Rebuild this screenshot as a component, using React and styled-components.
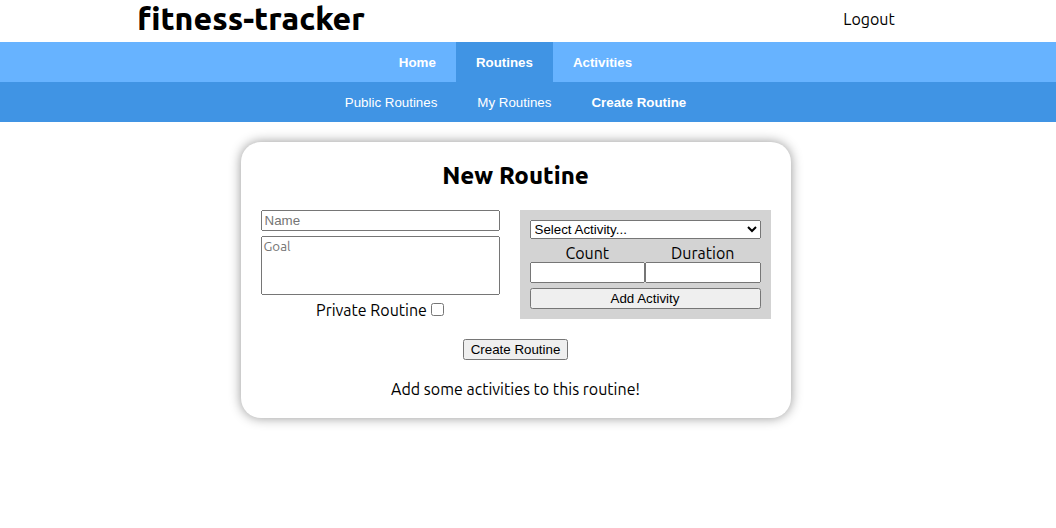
import React from "react";
import styled, { createGlobalStyle } from "styled-components";

const GlobalStyle = createGlobalStyle`
  body {
    margin: 0;
    background: #fff;
    color: #000;
    font-family: Ubuntu, "Noto Sans", "Open Sans", sans-serif;
    font-size: 16px;
    line-height: 18px;
    font-variant-ligatures: none;
  }
`;

const Header = styled.header`
  display: flex;
  justify-content: space-between;
  align-items: center;
  height: 42px;
  padding: 0 calc(13% + 24px) 4px 13%;
  box-sizing: border-box;
`;

const Title = styled.h1`
  margin: 0;
  padding-bottom: 2px;
  font-size: 32px;
  font-weight: 800;
  line-height: 36px;
`;

const Logout = styled.a`
  color: inherit;
  text-decoration: none;
`;

const NavBar = styled.nav`
  display: flex;
  justify-content: center;
  height: 40px;
  padding-right: 25px;
  background: ${(p) => (p.$sub ? "#4094e4" : "#67b3ff")};
`;

const NavButton = styled.button`
  border: 0;
  padding: 0 20px;
  color: #fff;
  background: ${(p) => (p.$active ? "#4094e4" : "transparent")};
  font-family: "Liberation Sans", Arial, sans-serif;
  font-weight: ${(p) => (p.$bold ? "bold" : "normal")};
`;

const Main = styled.main`
  display: flex;
  justify-content: center;
  padding: 20px 25px 20px 0;
`;

const Card = styled.form`
  box-sizing: border-box;
  width: 550px;
  padding: 20px;
  border-radius: 20px;
  box-shadow: 0 0 12px rgba(0, 0, 0, 0.42);
  text-align: center;
`;

const Heading = styled.h2`
  margin: 0 0 20px;
  font-size: 24px;
  font-weight: 800;
  line-height: 28px;
`;

const Columns = styled.div`
  display: flex;
  gap: 20px;
`;

const Fields = styled.div`
  display: flex;
  flex: 1;
  min-width: 0;
  flex-direction: column;
  gap: 5px;
`;

const ActivityPanel = styled.fieldset`
  display: flex;
  box-sizing: border-box;
  width: 251px;
  margin: 0;
  padding: 10px;
  border: 0;
  flex-direction: column;
  gap: 5px;
  background: lightgray;
`;

const Input = styled.input`
  box-sizing: border-box;
  width: 100%;
  height: 21px;
  font-family: "Liberation Sans", Arial, sans-serif;
`;

const Goal = styled.textarea`
  display: block;
  box-sizing: border-box;
  height: 59px;
  resize: none;
  font-family: Ubuntu, "Noto Sans", sans-serif;
`;

const CheckLabel = styled.label`
  display: flex;
  height: 19px;
  align-items: center;
  justify-content: center;
  gap: 4px;
`;

const Checkbox = styled.input`
  width: 13px;
  height: 13px;
  margin: 0;
`;

const Select = styled.select`
  height: 19px;
  font-family: "Liberation Sans", Arial, sans-serif;
`;

const Amounts = styled.div`
  display: grid;
  grid-template-columns: 1fr 1fr;
`;

const AmountLabel = styled.label`
  display: flex;
  flex-direction: column;
`;

const Button = styled.button`
  height: 21px;
  padding: 1px 6px;
  font-family: "Liberation Sans", Arial, sans-serif;
`;

const Submit = styled.div`
  display: flex;
  justify-content: center;
  margin: 20px 0;
`;

const Message = styled.p`
  margin: 0;
`;

export default function App() {
  return (
    <>
      <GlobalStyle />
      <Header>
        <Title>fitness-tracker</Title>
        <Logout href="#logout">Logout</Logout>
      </Header>
      <NavBar>
        <NavButton $bold>Home</NavButton>
        <NavButton $bold $active>Routines</NavButton>
        <NavButton $bold>Activities</NavButton>
      </NavBar>
      <NavBar $sub>
        <NavButton>Public Routines</NavButton>
        <NavButton>My Routines</NavButton>
        <NavButton $bold>Create Routine</NavButton>
      </NavBar>
      <Main>
        <Card onSubmit={(e) => e.preventDefault()}>
          <Heading>New Routine</Heading>
          <Columns>
            <Fields>
              <Input placeholder="Name" aria-label="Name" />
              <Goal placeholder="Goal" aria-label="Goal" />
              <CheckLabel>
                Private Routine
                <Checkbox type="checkbox" />
              </CheckLabel>
            </Fields>
            <ActivityPanel>
              <Select aria-label="Activity">
                <option>Select Activity...</option>
              </Select>
              <Amounts>
                <AmountLabel>
                  Count
                  <Input />
                </AmountLabel>
                <AmountLabel>
                  Duration
                  <Input />
                </AmountLabel>
              </Amounts>
              <Button type="button">Add Activity</Button>
            </ActivityPanel>
          </Columns>
          <Submit>
            <Button type="submit">Create Routine</Button>
          </Submit>
          <Message>Add some activities to this routine!</Message>
        </Card>
      </Main>
    </>
  );
}
